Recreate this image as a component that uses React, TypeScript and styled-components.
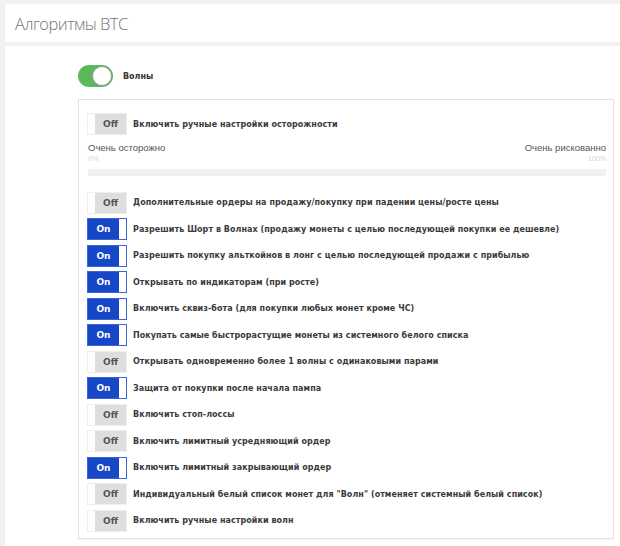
import React, { useState } from 'react'
import styled, { createGlobalStyle } from 'styled-components'

const GlobalStyle = createGlobalStyle`
  html, body { margin: 0; padding: 0; background: #f2f2f2; }
  body { font-family: "DejaVu Sans", Verdana, sans-serif; }
`

const Page = styled.div`
  width: 620px;
  height: 546px;
  padding: 4px 0 0 5px;
  box-sizing: border-box;
  overflow: hidden;
`

const Header = styled.div`
  height: 38px;
  background: #fff;
  display: flex;
  align-items: center;
  padding-left: 10px;
  font-family: "Open Sans", "Liberation Sans", sans-serif;
  font-weight: 300;
  font-size: 16.5px;
  letter-spacing: -0.5px;
  color: #767676;
`

const Body = styled.div`
  margin-top: 4px;
  background: #fff;
  height: 520px;
  padding: 19px 6px 0 73px;
  box-sizing: border-box;
`

const MainRow = styled.div`
  display: flex;
  align-items: center;
  gap: 10px;
  height: 22px;
`

const Switch = styled.div<{ $on: boolean }>`
  position: relative;
  width: 35px;
  height: 22px;
  border-radius: 11px;
  background: ${p => (p.$on ? '#5cb85c' : '#ddd')};
  cursor: pointer;
  &::after {
    content: '';
    position: absolute;
    top: 1px;
    left: ${p => (p.$on ? '14px' : '1px')};
    width: 18px;
    height: 18px;
    border-radius: 50%;
    background: #fff;
    border: 1px solid #9a9a9a;
  }
`

const MainLabel = styled.span`
  font-weight: bold;
  font-size: 8px;
  color: #333;
`

const Panel = styled.div`
  margin-top: 12px;
  border: 1px solid #e3e3e3;
  box-shadow: 0 1px 2px rgba(0, 0, 0, 0.05);
  height: 440px;
  padding: 13px 7px 0 8px;
  box-sizing: border-box;
`

const Row = styled.div`
  display: flex;
  align-items: center;
  gap: 6px;
  height: 22px;
  margin-bottom: 4.5px;
`

const Toggle = styled.div<{ $on: boolean }>`
  display: flex;
  width: 40px;
  height: 22px;
  flex: none;
  box-sizing: border-box;
  border: 1px solid ${p => (p.$on ? '#3a66d8' : '#eee')};
  background: #fff;
  cursor: pointer;
`

const Knob = styled.div<{ $on: boolean }>`
  width: 31px;
  display: flex;
  align-items: center;
  justify-content: center;
  font-weight: bold;
  font-size: 9px;
  margin-left: ${p => (p.$on ? '0' : 'auto')};
  background: ${p => (p.$on ? '#1547c7' : '#dedede')};
  color: ${p => (p.$on ? '#fff' : '#555')};
`

const Label = styled.span`
  font-weight: bold;
  font-size: 8px;
  letter-spacing: 0.05px;
  color: #3a3a3a;
  white-space: nowrap;
`

const Range = styled.div`
  padding: 2px 0 0 1px;
  margin-bottom: 16px;
`

const RangeLabels = styled.div`
  display: flex;
  justify-content: space-between;
  color: #555;
  font-family: "Liberation Sans", Arial, sans-serif;
  font-size: 9.5px;
`

const RangeEnd = styled.div<{ $right?: boolean }>`
  display: flex;
  flex-direction: column;
  align-items: ${p => (p.$right ? 'flex-end' : 'flex-start')};
  gap: 2px;
`

const Percent = styled.span`
  font-size: 7px;
  color: #d4d4d4;
`

const Track = styled.div`
  margin-top: 7px;
  height: 7px;
  background: #f1f1f1;
`

type Item = { text: string; on: boolean }

const items: Item[] = [
  { text: 'Дополнительные ордеры на продажу/покупку при падении цены/росте цены', on: false },
  { text: 'Разрешить Шорт в Волнах (продажу монеты с целью последующей покупки ее дешевле)', on: true },
  { text: 'Разрешить покупку альткойнов в лонг с целью последующей продажи с прибылью', on: true },
  { text: 'Открывать по индикаторам (при росте)', on: true },
  { text: 'Включить сквиз-бота (для покупки любых монет кроме ЧС)', on: true },
  { text: 'Покупать самые быстрорастущие монеты из системного белого списка', on: true },
  { text: 'Открывать одновременно более 1 волны с одинаковыми парами', on: false },
  { text: 'Защита от покупки после начала пампа', on: true },
  { text: 'Включить стоп-лоссы', on: false },
  { text: 'Включить лимитный усредняющий ордер', on: false },
  { text: 'Включить лимитный закрывающий ордер', on: true },
  { text: 'Индивидуальный белый список монет для "Волн" (отменяет системный белый список)', on: false },
  { text: 'Включить ручные настройки волн', on: false },
]

function OnOff({ on, onClick }: { on: boolean; onClick: () => void }) {
  return (
    <Toggle $on={on} onClick={onClick}>
      <Knob $on={on}>{on ? 'On' : 'Off'}</Knob>
    </Toggle>
  )
}

export default function App() {
  const [waves, setWaves] = useState(true)
  const [careful, setCareful] = useState(false)
  const [flags, setFlags] = useState(items.map(i => i.on))

  const flip = (idx: number) => setFlags(f => f.map((v, i) => (i === idx ? !v : v)))

  return (
    <>
      <GlobalStyle />
      <Page>
        <Header>Алгоритмы BTC</Header>
        <Body>
          <MainRow>
            <Switch $on={waves} onClick={() => setWaves(!waves)} />
            <MainLabel>Волны</MainLabel>
          </MainRow>
          <Panel>
            <Row>
              <OnOff on={careful} onClick={() => setCareful(!careful)} />
              <Label>Включить ручные настройки осторожности</Label>
            </Row>
            <Range>
              <RangeLabels>
                <RangeEnd>
                  <span>Очень осторожно</span>
                  <Percent>0%</Percent>
                </RangeEnd>
                <RangeEnd $right>
                  <span>Очень рискованно</span>
                  <Percent>100%</Percent>
                </RangeEnd>
              </RangeLabels>
              <Track />
            </Range>
            {items.map((it, i) => (
              <Row key={i}>
                <OnOff on={flags[i]} onClick={() => flip(i)} />
                <Label>{it.text}</Label>
              </Row>
            ))}
          </Panel>
        </Body>
      </Page>
    </>
  )
}
